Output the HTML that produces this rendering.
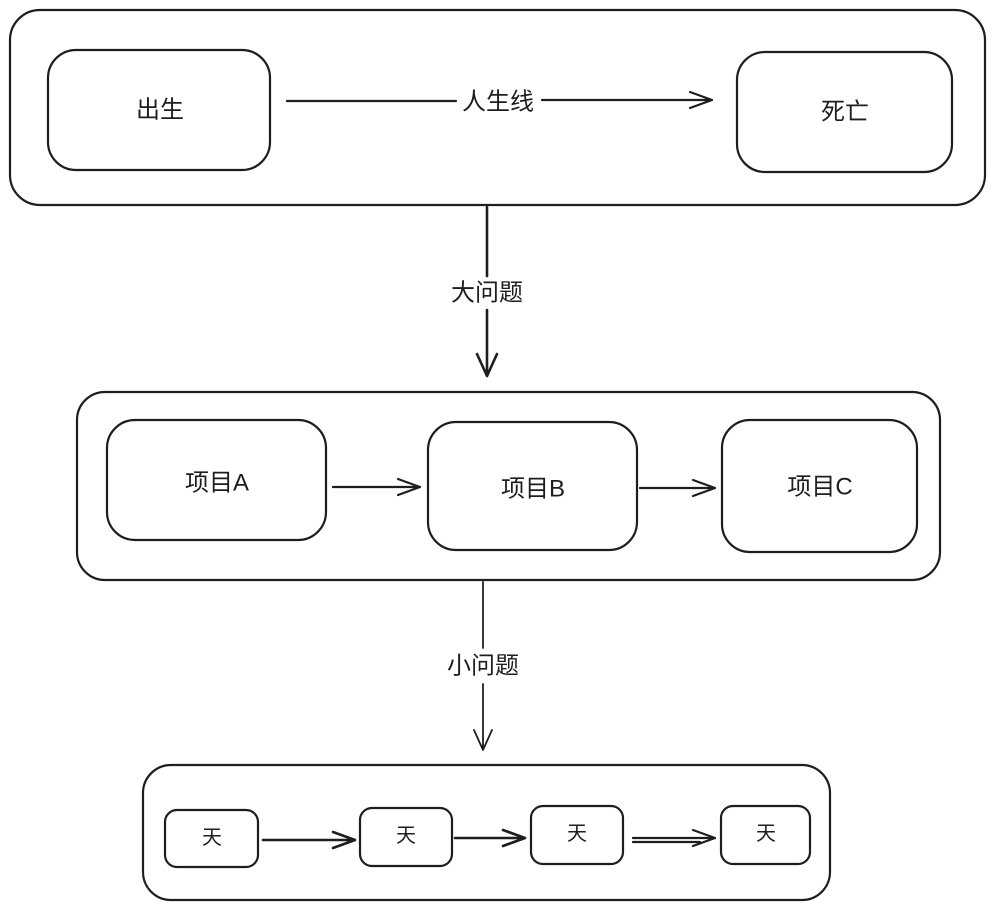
<!DOCTYPE html>
<html><head><meta charset="utf-8"><style>
html,body{margin:0;padding:0;background:#fff;}
svg{display:block}
text{font-family:"Liberation Sans","Noto Sans CJK SC",sans-serif;fill:#1e1e1e;text-anchor:middle;dominant-baseline:central}
</style></head><body>
<svg width="993" height="913" viewBox="0 0 993 913" xmlns="http://www.w3.org/2000/svg">
<g fill="none" stroke="#1e1e1e" stroke-width="2.2" stroke-linecap="round" stroke-linejoin="round">
<rect x="10" y="10" width="975" height="195" rx="30"/>
<rect x="48" y="50" width="222" height="120" rx="28"/>
<rect x="737" y="52" width="215" height="120" rx="28"/>
<path d="M287 101 L456 101 M542 100 L712 100 M690 92 L712 100 L690 108"/>
<path d="M487 207 L487 276 M487 310 L487 376 M477 354 L487 376 L497 354" stroke-width="2.6"/>
<rect x="77" y="392" width="863" height="188" rx="28"/>
<rect x="107" y="420" width="219" height="120" rx="28"/>
<rect x="428" y="422" width="209" height="128" rx="28"/>
<rect x="722" y="420" width="195" height="132" rx="28"/>
<path d="M333 487 L420 487 M398 479 L420 487 L398 495"/>
<path d="M640 488 L715 488 M693 480 L715 488 L693 496"/>
<path d="M483 582 L483 648 M483 684 L483 750 M474 730 L483 750 L492 730" stroke-width="1.8"/>
<rect x="143" y="765" width="687" height="135" rx="28"/>
<rect x="165" y="810" width="93" height="57" rx="12"/>
<rect x="360" y="808" width="92" height="58" rx="12"/>
<rect x="531" y="806" width="92" height="58" rx="12"/>
<rect x="721" y="806" width="89" height="58" rx="12"/>
<path d="M263 840 L355 840 M333 832 L355 840 L333 848" stroke-width="2.6"/>
<path d="M455 838 L525 838 M503 830 L525 838 L503 846" stroke-width="2.6"/>
<path d="M633 838 L715 838 M633 842 L700 842 M693 830 L715 838 L693 846"/>
</g>
<g font-size="24">
<text x="160" y="110">出生</text>
<text x="845" y="112">死亡</text>
<text x="498" y="102">人生线</text>
<text x="487" y="293">大问题</text>
<text x="217" y="483">项目A</text>
<text x="533" y="489">项目B</text>
<text x="820" y="487">项目C</text>
<text x="483" y="666">小问题</text>
</g>
<g font-size="20">
<text x="212" y="838">天</text>
<text x="406" y="836">天</text>
<text x="577" y="834">天</text>
<text x="766" y="834">天</text>
</g>
</svg>
</body></html>
